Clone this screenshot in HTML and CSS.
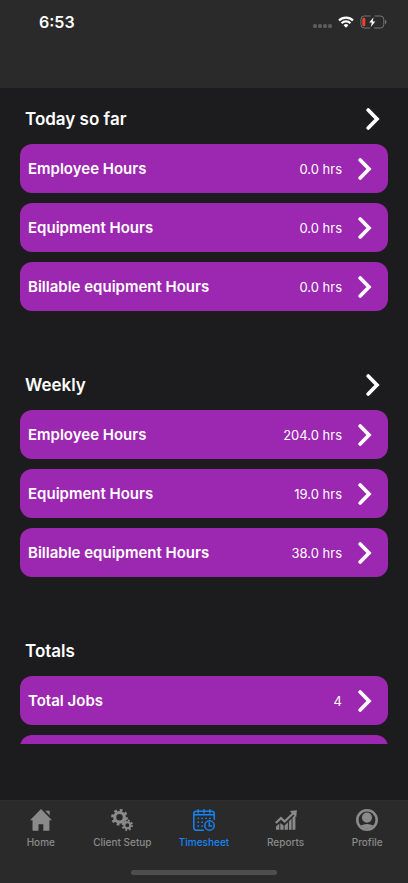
FILE: index.html
```html
<!DOCTYPE html>
<html lang="en">
<head>
	<meta charset="UTF-8">
	<meta name="viewport" content="width=device-width, initial-scale=1">
	<title>Timesheet</title>
	<link rel="stylesheet" href="styles.css">
</head>
<body>
	<svg class="defs" aria-hidden="true">
		<symbol id="arrow" viewBox="0 0 14 24">
			<path d="M2.200 3 11 12 2.200 21" fill="none" stroke="currentColor" stroke-width="3.700" stroke-linecap="round" stroke-linejoin="miter"/>
		</symbol>
	</svg>

	<header class="header">
		<div class="status">
			<span class="time">6:53</span>
			<div class="signals">
				<svg class="dots" width="19" height="12" viewBox="0 0 19 12" fill="#5c5c5c">
					<rect x="0" y="8" width="4" height="4" rx="1.500"/>
					<rect x="5" y="8" width="4" height="4" rx="1.500"/>
					<rect x="10" y="8" width="4" height="4" rx="1.500"/>
					<rect x="15" y="8" width="4" height="4" rx="1.500"/>
				</svg>
				<svg class="wifi" width="16" height="12" viewBox="0 0 16 12" fill="none" stroke="#fff" stroke-width="2.300">
					<path d="M1 4.500a10 10 0 0 1 14 0"/>
					<path d="M3.600 7.200a6.300 6.300 0 0 1 8.800 0"/>
					<path d="M8 11.800 5.600 9.300a3.400 3.400 0 0 1 4.800 0z" fill="#fff" stroke="none"/>
				</svg>
				<svg class="battery" width="27" height="14" viewBox="0 0 27 14">
					<path d="M10.500 1H4.200A3.300 3.300 0 0 0 .9 4.300v5.400A3.300 3.300 0 0 0 4.200 13h6M14.500 1h6A3.300 3.300 0 0 1 23.800 4.300v5.400a3.300 3.300 0 0 1-3.300 3.300h-6.500" fill="none" stroke="#757575"/>
					<path d="M25 4.800q1.500.6 1.500 2.200T25 9.200z" fill="#757575"/>
					<rect x="2.300" y="2.700" width="3" height="8.600" rx="1.300" fill="#f0402f"/>
					<path d="M13.600 2.300 9.200 7.600h2.600l-1 4.500 4.500-5.600h-2.700z" fill="#fff"/>
				</svg>
			</div>
		</div>
	</header>

	<main class="content">
		<section class="group">
			<div class="group-head">
				<h2>Today so far</h2>
				<a href="#today" aria-label="Today so far"><svg class="arrow"><use href="#arrow"/></svg></a>
			</div>
			<a href="#" class="card">
				<span class="name">Employee Hours</span>
				<span class="value">0.0 hrs</span>
				<svg class="arrow"><use href="#arrow"/></svg>
			</a>
			<a href="#" class="card">
				<span class="name">Equipment Hours</span>
				<span class="value">0.0 hrs</span>
				<svg class="arrow"><use href="#arrow"/></svg>
			</a>
			<a href="#" class="card">
				<span class="name">Billable equipment Hours</span>
				<span class="value">0.0 hrs</span>
				<svg class="arrow"><use href="#arrow"/></svg>
			</a>
		</section>

		<section class="group">
			<div class="group-head">
				<h2>Weekly</h2>
				<a href="#weekly" aria-label="Weekly"><svg class="arrow"><use href="#arrow"/></svg></a>
			</div>
			<a href="#" class="card">
				<span class="name">Employee Hours</span>
				<span class="value">204.0 hrs</span>
				<svg class="arrow"><use href="#arrow"/></svg>
			</a>
			<a href="#" class="card">
				<span class="name">Equipment Hours</span>
				<span class="value">19.0 hrs</span>
				<svg class="arrow"><use href="#arrow"/></svg>
			</a>
			<a href="#" class="card">
				<span class="name">Billable equipment Hours</span>
				<span class="value">38.0 hrs</span>
				<svg class="arrow"><use href="#arrow"/></svg>
			</a>
		</section>

		<section class="group">
			<div class="group-head">
				<h2>Totals</h2>
			</div>
			<a href="#" class="card">
				<span class="name">Total Jobs</span>
				<span class="value">4</span>
				<svg class="arrow"><use href="#arrow"/></svg>
			</a>
			<div class="card"></div>
		</section>
	</main>

	<footer class="footer">
		<nav class="tabs">
			<a href="#" class="tab">
				<svg viewBox="0 0 22 22" fill="currentColor">
					<path d="M11 0 0 11.300h2.500V21q0 .7.700.700h5.300v-6.500h4.800v6.500h5.400q.700 0 .700-.700v-9.700H22z"/>
					<path d="M15.300 1.800h4.400v4.800z"/>
				</svg>
				<span>Home</span>
			</a>
			<a href="#" class="tab">
				<svg viewBox="0 0 22 22" fill="none" stroke="currentColor">
					<circle cx="8.500" cy="8.300" r="4.800" stroke-width="3.200"/>
					<circle cx="8.500" cy="8.300" r="7" stroke-width="2.800" stroke-dasharray="2.700 2.798"/>
					<circle cx="16.300" cy="16.200" r="3" stroke-width="2"/>
					<circle cx="16.300" cy="16.200" r="4.700" stroke-width="2" stroke-dasharray="1.850 1.841"/>
				</svg>
				<span>Client Setup</span>
			</a>
			<a href="#" class="tab active">
				<svg viewBox="0 0 22 22" fill="none" stroke="currentColor" stroke-width="1.500" stroke-linecap="round">
					<path d="M10.300 21.200H3.300Q.8 21.200.8 18.600V4.700Q.8 2.300 3.300 2.300h15.400q2.500 0 2.500 2.400v5.500M.8 5.800h20.400M5.200.8v3.200M11 .8v3.200M16.800.8v3.200"/>
					<circle cx="16.500" cy="16.500" r="4.700"/>
					<path d="M16.300 13.800v3.200h2.300"/>
					<path d="M5.200 9.300h.1M9.100 9.300h.1M13 9.300h.1M16.900 9.300h.1M5.200 13.200h.1M9.100 13.200h.1M5.200 17.100h.1M9.100 17.100h.1" stroke-width="1.700"/>
				</svg>
				<span>Timesheet</span>
			</a>
			<a href="#" class="tab">
				<svg viewBox="0 0 22 22" fill="currentColor">
					<path d="M1 17.500 4.300 14.800v6H1zM5.300 13.900l3.300 2.600v4.300H5.300zM9.600 16.600l3.300-3.300v7.500H9.600zM13.900 12.300l2.700-2.900v11.400h-2.700zM17.500 8.500l2.900-3v15.300h-2.900z"/>
					<path d="m.8 14 5.100-4.900 3.700 3.400L18.500 4" fill="none" stroke="currentColor" stroke-width="2.200"/>
					<path d="m14.800 2 7.100-.7-.7 7z"/>
				</svg>
				<span>Reports</span>
			</a>
			<a href="#" class="tab">
				<svg viewBox="0 0 22 22">
					<circle cx="11" cy="11" r="9.700" fill="none" stroke="currentColor" stroke-width="2.600"/>
					<circle cx="11" cy="8.600" r="5.100" fill="currentColor"/>
					<path d="M4.500 16.500q6.500-3 13 0-6.500 6.500-13 0z" fill="currentColor"/>
				</svg>
				<span>Profile</span>
			</a>
		</nav>
		<div class="home-bar"></div>
	</footer>
</body>
</html>
```
FILE: styles.css
```css
*{
	margin: 0;
	padding: 0;
	box-sizing: border-box;
}

body{
	height: 100vh;
	display: flex;
	flex-direction: column;
	background-color: #1c1c1e;
	color: #fff;
	font-family: Inter, "Liberation Sans", sans-serif;
}

a{
	color: inherit;
	text-decoration: none;
}

svg{
	display: block;
	flex: none;
}

.defs{
	position: absolute;
	width: 0;
	height: 0;
}

/* status bar */
.header{
	flex: none;
	height: 88px;
	background-color: #2a2a2a;
}

.status{
	display: flex;
	justify-content: space-between;
	align-items: center;
	height: 44px;
	padding: 0 21px 0 39px;
}

.time{
	font-size: 16px;
	font-weight: 600;
}

.signals{
	display: flex;
	align-items: center;
	gap: 6px;
}

/* scrolling list */
.content{
	flex: 1;
	min-height: 0;
	margin-bottom: 56px;
	padding: 6px 20px 0;
	overflow-y: auto;
	scrollbar-width: none;
}

.group{
	margin-bottom: 49px;
}

.group-head{
	display: flex;
	justify-content: space-between;
	align-items: center;
	height: 50px;
	padding: 0 8px 0 5px;
}

.group-head h2{
	font-size: 17px;
	font-weight: 600;
}

.arrow{
	width: 14px;
	height: 24px;
}

.card{
	display: flex;
	align-items: center;
	height: 49px;
	padding: 0 16px 0 8px;
	border-radius: 12px;
	background-color: #9c27b0;
}

.card + .card{
	margin-top: 10px;
}

.name{
	flex: 1;
	font-size: 15px;
	font-weight: 600;
}

.value{
	margin-right: 16px;
	font-size: 13px;
}

/* bottom tabs */
.footer{
	flex: none;
	height: 83px;
	border-top: 1px solid #2e2e30;
	background-color: #2a2a2a;
}

.tabs{
	display: flex;
	height: 69px;
	padding-top: 8px;
}

.tab{
	flex: 1;
	display: flex;
	flex-direction: column;
	align-items: center;
	gap: 4px;
	color: #8a8a8a;
	font-size: 10px;
	font-weight: 500;
	line-height: 14px;
	white-space: nowrap;
}

.tab svg{
	width: 22px;
	height: 22px;
}

.active{
	color: #1684f8;
}

.home-bar{
	width: 36%;
	height: 5px;
	margin: 0 auto;
	border-radius: 3px;
	background-color: #4e4e4e;
}
```
